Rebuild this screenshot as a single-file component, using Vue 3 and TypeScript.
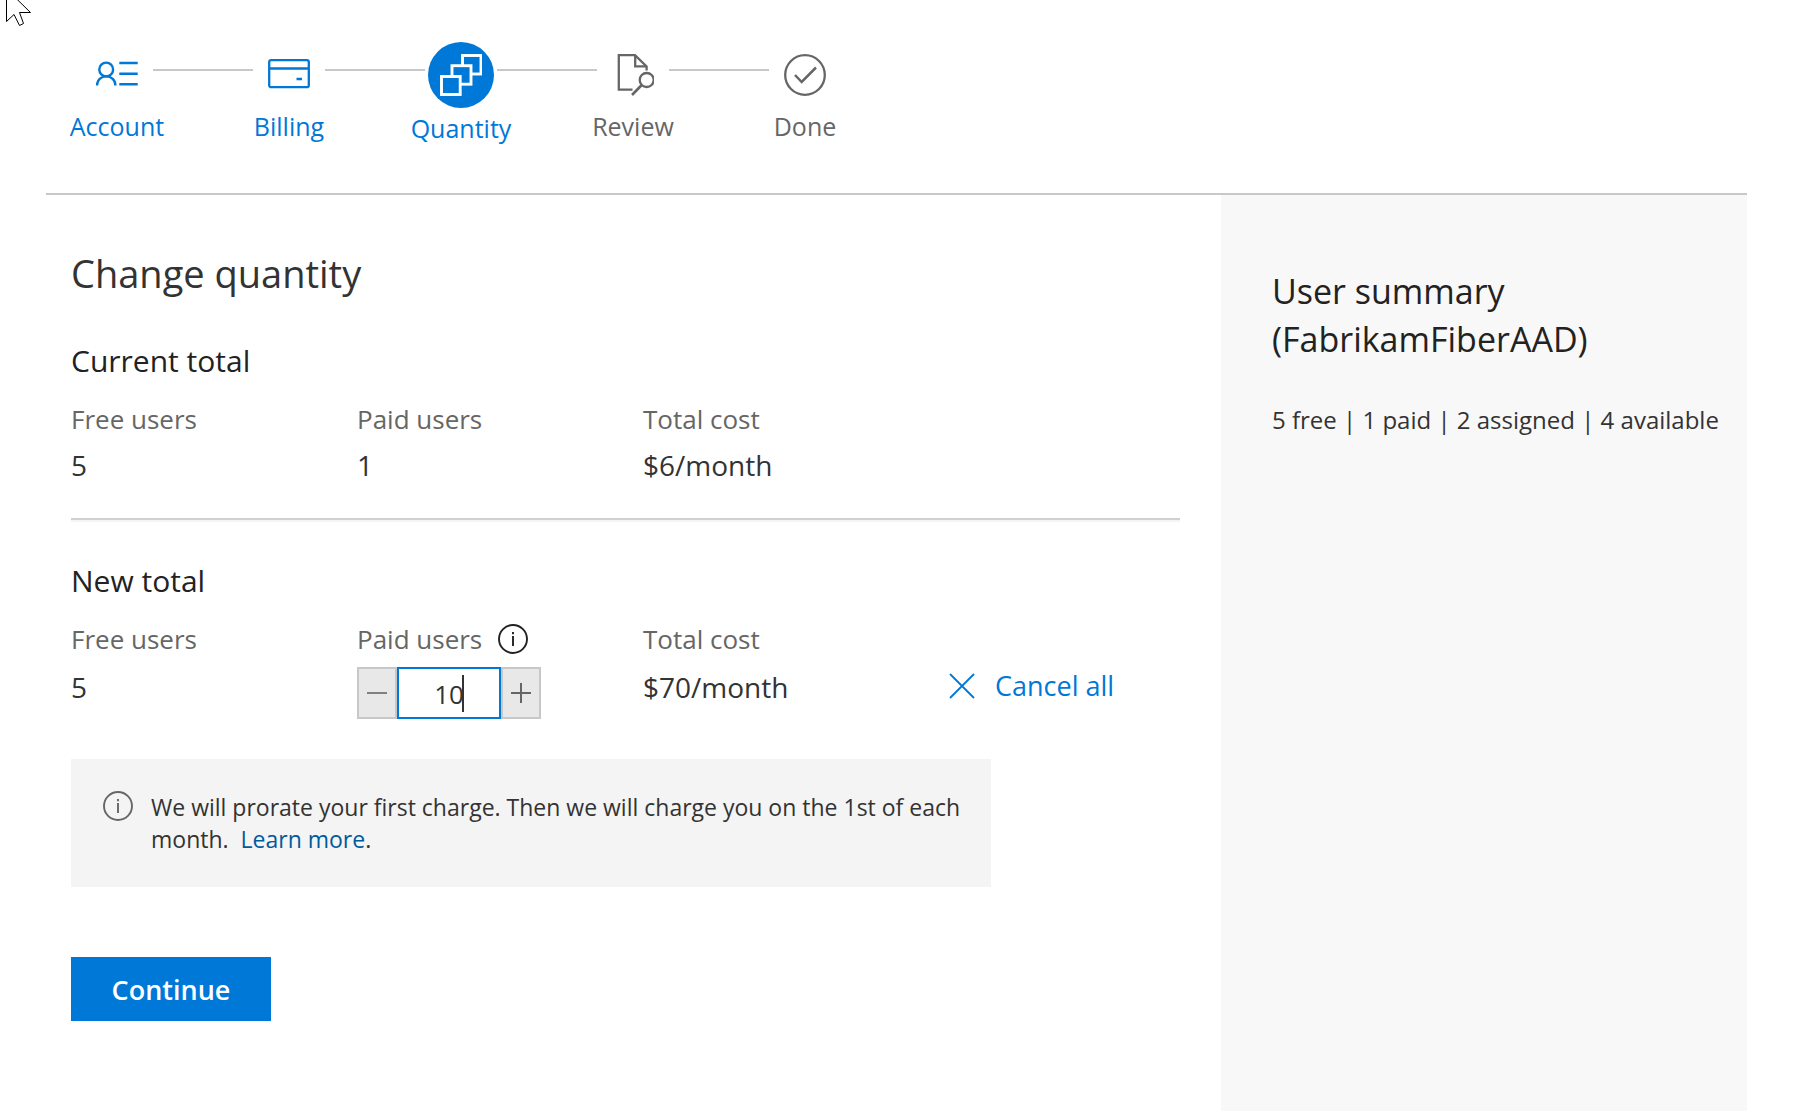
<script setup lang="ts">
import { computed, ref } from 'vue'

interface Step {
  id: string
  label: string
  state: 'visited' | 'current' | 'upcoming'
}

const steps: Step[] = [
  { id: 'account', label: 'Account', state: 'visited' },
  { id: 'billing', label: 'Billing', state: 'visited' },
  { id: 'quantity', label: 'Quantity', state: 'current' },
  { id: 'review', label: 'Review', state: 'upcoming' },
  { id: 'done', label: 'Done', state: 'upcoming' },
]

const freeUsers = 5
const currentPaid = 1
const paidUsers = ref(10)

// The first five paid users cost $6 each, further ones $8 each.
function monthlyCost(count: number): number {
  return Math.min(count, 5) * 6 + Math.max(count - 5, 0) * 8
}

const newCost = computed(() => monthlyCost(paidUsers.value))

function change(by: number) {
  paidUsers.value = Math.max(0, Number(paidUsers.value) + by)
}
</script>

<template>
  <div class="page">
    <svg class="pointer" width="34" height="28" viewBox="0 0 34 28" aria-hidden="true">
      <path d="M6.5 -11V21.5L14 14.5L19.5 25.5L23.5 23.5L19.5 12.5H30.5Z" fill="#fff" stroke="#000" />
    </svg>

    <header class="header">
      <ol class="steps">
        <template v-for="(step, index) in steps" :key="step.id">
          <li v-if="index > 0" class="connector" aria-hidden="true"></li>
          <li class="step" :class="step.state" :aria-current="step.state === 'current' ? 'step' : undefined">
            <span class="step-icon">
              <svg width="42" height="42" viewBox="0 0 42 42" fill="none" stroke="currentColor" stroke-width="2.3" aria-hidden="true">
                <g v-if="step.id === 'account'" stroke-width="2.4">
                  <circle cx="10.2" cy="15.5" r="6.9" />
                  <path d="M1 31.5C1 26 5 22.4 10.2 22.4S19.4 26 19.4 31.5" />
                  <path d="M23.3 9H41.7M23.3 19.8H41.7M23.3 30.2H41.7" />
                </g>
                <g v-else-if="step.id === 'billing'">
                  <rect x="1.2" y="6.2" width="39.6" height="27" rx="2" />
                  <path d="M1 14.5H41M28.5 25H34" />
                </g>
                <g v-else-if="step.id === 'quantity'" fill="#0078d7" stroke-width="2.9">
                  <rect x="22.5" y="1.5" width="18.5" height="18.5" />
                  <rect x="12" y="11.7" width="19" height="18.5" />
                  <rect x="1.5" y="22.5" width="18.7" height="18" />
                </g>
                <g v-else-if="step.id === 'review'">
                  <path d="M20.5 35.7H6.8V1.2H23L34.6 12.4V16.4" />
                  <path d="M23.2 1.2V12.4H34.6" />
                  <circle cx="34.7" cy="26" r="7" />
                  <path d="M29.7 31L20 41" stroke-width="2.6" />
                </g>
                <g v-else>
                  <circle cx="21" cy="21" r="19.8" />
                  <path d="M11 21L17.7 28L32 13.5" stroke-width="2.5" />
                </g>
              </svg>
            </span>
            <span class="step-label">{{ step.label }}</span>
          </li>
        </template>
      </ol>
    </header>

    <div class="body">
      <main class="main">
        <h1>Change quantity</h1>

        <h2>Current total</h2>
        <div class="totals">
          <div>
            <p class="label">Free users</p>
            <p class="value">{{ freeUsers }}</p>
          </div>
          <div>
            <p class="label">Paid users</p>
            <p class="value">{{ currentPaid }}</p>
          </div>
          <div>
            <p class="label">Total cost</p>
            <p class="value">${{ monthlyCost(currentPaid) }}/month</p>
          </div>
        </div>

        <hr class="rule" />

        <h2>New total</h2>
        <div class="totals editable">
          <div>
            <p class="label">Free users</p>
            <p class="value">{{ freeUsers }}</p>
          </div>
          <div>
            <div class="label with-info">
              <label for="paid-users">Paid users</label>
              <svg width="30" height="30" viewBox="0 0 30 30" fill="none" stroke="#222" stroke-width="1.9" aria-hidden="true">
                <circle cx="15" cy="15" r="14" />
                <path d="M15 12V22M15 8V10.2" />
              </svg>
            </div>
            <div class="stepper">
              <button type="button" aria-label="Remove one user" @click="change(-1)">
                <svg width="20" height="20" viewBox="0 0 20 20" stroke="#808080" stroke-width="2" aria-hidden="true">
                  <path d="M0 10H20" />
                </svg>
              </button>
              <span class="entry">
                <input id="paid-users" v-model="paidUsers" type="text" inputmode="numeric" />
                <span class="caret"></span>
              </span>
              <button type="button" aria-label="Add one user" @click="change(1)">
                <svg width="20" height="20" viewBox="0 0 20 20" stroke="#666" stroke-width="2" aria-hidden="true">
                  <path d="M0 10H20M10 0V20" />
                </svg>
              </button>
            </div>
          </div>
          <div>
            <p class="label">Total cost</p>
            <p class="value">${{ newCost }}/month</p>
          </div>
          <button type="button" class="cancel" @click="paidUsers = currentPaid">
            <svg width="26" height="26" viewBox="0 0 26 26" stroke="currentColor" stroke-width="1.8" aria-hidden="true">
              <path d="M1 1L25 25M25 1L1 25" />
            </svg>
            Cancel all
          </button>
        </div>

        <div class="notice">
          <svg width="30" height="30" viewBox="0 0 30 30" fill="none" stroke="#666" stroke-width="1.9" aria-hidden="true">
            <circle cx="15" cy="15" r="14" />
            <path d="M15 12V22M15 8V10.2" />
          </svg>
          <p>
            We will prorate your first charge. Then we will charge you on the 1st of each month.&nbsp;
            <a href="#learn-more">Learn more</a>.
          </p>
        </div>

        <button type="button" class="continue">Continue</button>
      </main>

      <aside class="summary">
        <h2>User summary (FabrikamFiberAAD)</h2>
        <p>5 free | 1 paid | 2 assigned | 4 available</p>
      </aside>
    </div>
  </div>
</template>

<style>
body {
  margin: 0;
  background: #fff;
}
</style>

<style scoped>
.page {
  display: flex;
  flex-direction: column;
  box-sizing: border-box;
  min-height: 100vh;
  padding: 0 51px 0 46px;
  font-family: "Segoe UI", "Open Sans", "Noto Sans", sans-serif;
  color: #333;
}

h1,
h2,
p,
ol {
  margin: 0;
  padding: 0;
  font-weight: 400;
}

svg {
  display: block;
  flex: none;
}

button,
input {
  font-family: inherit;
  margin: 0;
}

.pointer {
  position: absolute;
  top: 0;
  left: 0;
}

.header {
  padding: 42px 35px 47px;
  border-bottom: 2px solid #c8c8c8;
}

.steps {
  display: flex;
  list-style: none;
}

.connector {
  width: 100px;
  height: 2px;
  margin-top: 27px;
  background: #c8c8c8;
}

.step {
  display: flex;
  flex-direction: column;
  align-items: center;
  width: 72px;
  color: #666;
}

.step.visited,
.step.current {
  color: #0078d7;
}

.step-icon {
  padding: 12px 12px 10px;
}

.current .step-icon {
  padding: 12px;
  border-radius: 50%;
  background: #0078d7;
  color: #fff;
}

.step-label {
  margin-top: 2px;
  font-size: 25px;
  line-height: 36px;
  white-space: nowrap;
}

.body {
  display: grid;
  grid-template-columns: minmax(0, 1fr) 526px;
  flex: 1;
}

.main {
  padding: 52px 41px 40px 25px;
}

h1 {
  font-size: 38px;
  line-height: 52px;
}

.main h2 {
  margin-bottom: 20px;
  font-size: 30px;
  line-height: 40px;
  color: #222;
}

h1 + h2 {
  margin-top: 42px;
}

.totals {
  display: grid;
  grid-template-columns: minmax(0, 286px) minmax(0, 286px) minmax(0, 306px) auto;
  justify-content: start;
}

.label {
  margin-bottom: 8px;
  font-size: 26px;
  line-height: 36px;
  color: #666;
}

.editable .label {
  margin-bottom: 10px;
}

.with-info {
  display: flex;
  align-items: center;
  gap: 16px;
}

.value {
  font-size: 28px;
  line-height: 40px;
}

.rule {
  height: 2px;
  margin: 33px 0 39px;
  border: 0;
  border-bottom: 2px solid #f4f4f4;
  background: #d0d0d0;
}

.stepper {
  display: flex;
  width: 184px;
  height: 52px;
}

.stepper button {
  display: flex;
  align-items: center;
  justify-content: center;
  width: 40px;
  padding: 0;
  border: 2px solid #c8c8c8;
  background: #e8e8e8;
}

.entry {
  position: relative;
  flex: 1;
}

.entry input {
  box-sizing: border-box;
  width: 100%;
  height: 100%;
  padding: 2px 0 0;
  border: 2px solid #0078d7;
  background: #fff;
  font-size: 26px;
  text-align: center;
  color: #333;
  outline: none;
}

.caret {
  position: absolute;
  top: 8px;
  left: 65px;
  width: 2px;
  height: 37px;
  background: #333;
}

.cancel {
  display: flex;
  align-items: center;
  align-self: start;
  gap: 20px;
  margin-top: 47px;
  padding: 0;
  border: 0;
  background: none;
  font-size: 27px;
  line-height: 36px;
  white-space: nowrap;
  color: #0078d7;
}

.notice {
  display: flex;
  gap: 18px;
  box-sizing: border-box;
  max-width: 920px;
  margin-top: 40px;
  padding: 32px 24px 32px 32px;
  background: #f4f4f4;
  font-size: 23px;
  line-height: 32px;
}

.notice a {
  color: #005a9e;
  text-decoration: none;
}

.continue {
  width: 200px;
  height: 64px;
  margin-top: 70px;
  padding: 2px 0 0;
  border: 0;
  background: #0078d7;
  font-size: 27px;
  font-weight: 600;
  line-height: 36px;
  color: #fff;
}

.summary {
  padding: 72px 24px 40px 51px;
  background: #f8f8f8;
}

.summary h2 {
  margin-bottom: 41px;
  font-size: 34px;
  line-height: 48px;
  color: #222;
}

.summary p {
  font-size: 24px;
  line-height: 32px;
  white-space: nowrap;
}
</style>
